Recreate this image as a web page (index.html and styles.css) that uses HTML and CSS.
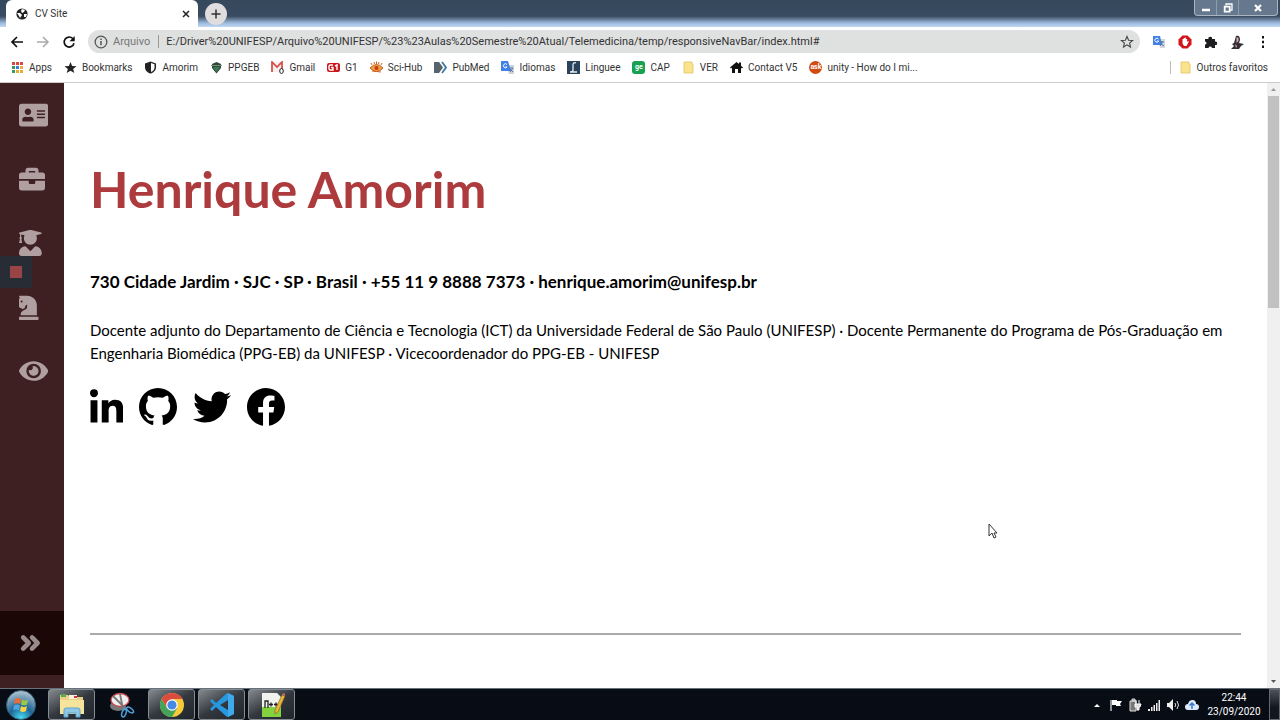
FILE: index.html
```html
<!DOCTYPE html>
<html lang="pt-BR">
<head>
<meta charset="utf-8">
<title>CV Site</title>
<link rel="stylesheet" href="styles.css">
</head>
<body>
<div class="desktop">
  <header class="tabstrip">
    <div class="tab">
      <svg class="tab-icon" viewBox="0 0 12 12"><circle cx="6" cy="6" r="5.6" fill="#222"/><path d="M1 5l3 0 2 2-2 3-1-2zM6 1l3 1-1 2-2 1-1-2zM8 6l3 0-1 3-2 0z" fill="#fff"/></svg>
      <span class="tab-title">CV Site</span>
      <button class="tab-close" aria-label="Fechar guia"><svg viewBox="0 0 8 8"><path d="M1 1l6 6M7 1l-6 6" stroke="#222" stroke-width="1.5"/></svg></button>
    </div>
    <button class="new-tab" aria-label="Nova guia"><svg viewBox="0 0 12 12"><path d="M6 1.500v9M1.500 6h9" stroke="#333" stroke-width="1.500"/></svg></button>
    <div class="window-controls">
      <button aria-label="Minimizar"><svg viewBox="0 0 10 10"><path d="M1 7h8" stroke="#fff" stroke-width="2.500"/></svg></button>
      <button aria-label="Restaurar"><svg viewBox="0 0 10 10"><path d="M3 2.500V1h6v6H7.500" fill="none" stroke="#fff" stroke-width="1.300"/><path d="M1.700 3.700h5v5h-5z" fill="none" stroke="#fff" stroke-width="1.800"/></svg></button>
      <button class="close" aria-label="Fechar"><svg viewBox="0 0 10 10"><path d="M2 2l6 6M8 2l-6 6" stroke="#fff" stroke-width="2.200"/></svg></button>
    </div>
  </header>

  <div class="toolbar">
    <button aria-label="Voltar"><svg viewBox="0 0 14 14"><path d="M13 7H2M7 2L2 7l5 5" fill="none" stroke="#111" stroke-width="1.700"/></svg></button>
    <button aria-label="Avançar"><svg viewBox="0 0 14 14"><path d="M1 7h11M7 2l5 5-5 5" fill="none" stroke="#aaa" stroke-width="1.500"/></svg></button>
    <button aria-label="Recarregar"><svg viewBox="0 0 14 14"><path d="M12 8.200A5 5 0 1 1 10.700 3.500L12 5" fill="none" stroke="#111" stroke-width="1.700"/><path d="M12.700 1v5.300H7.500z" fill="#111"/></svg></button>
    <div class="omnibox">
      <svg class="info" viewBox="0 0 12 12"><circle cx="6" cy="6" r="5" fill="none" stroke="#555" stroke-width="1.100"/><path d="M6 5.200v3.600M6 3v1.300" stroke="#555" stroke-width="1.300"/></svg>
      <label class="scheme" for="url">Arquivo</label>
      <input id="url" class="url" type="text" value="E:/Driver%20UNIFESP/Arquivo%20UNIFESP/%23%23Aulas%20Semestre%20Atual/Telemedicina/temp/responsiveNavBar/index.html#">
      <button aria-label="Adicionar aos favoritos"><svg viewBox="0 0 14 14"><path d="M7 1.500l1.600 3.700 4 .3-3 2.600.9 3.900L7 9.900l-3.500 2.100.9-3.900-3-2.600 4-.3z" fill="none" stroke="#444" stroke-width="1.100"/></svg></button>
    </div>
    <div class="extensions">
      <button aria-label="Tradutor"><svg viewBox="0 0 14 14"><path d="M6 4h7v9H8z" fill="#d5d9dd"/><path d="M1 1h7l2 9H1z" fill="#4180e8"/><path d="M6.500 4A2 2 0 1 0 6.700 6H5" fill="none" stroke="#fff"/><path d="M8 7h4M10 6v1c0 2-1 3-2 4M9 9l3 2" fill="none" stroke="#50749a"/></svg></button>
      <button aria-label="Bloqueador"><svg viewBox="0 0 14 14"><path d="M4.500.5h5l4 4v5l-4 4h-5l-4-4v-5z" fill="#d3121b"/><path d="M4.500 6V4h1.200V3h1.200v-.5h1V4h1.200v3l1-1 .8.600L8.500 11H6L4.500 8.500z" fill="#fff"/></svg></button>
      <button aria-label="Extensões"><svg viewBox="0 0 14 14"><path d="M1 4h3.500a1.800 1.800 0 1 1 3.500 0h3v2.500a1.800 1.800 0 1 1 0 3.500v3H8a1.800 1.800 0 0 0-3.500 0H1V9.500a1.500 1.500 0 0 0 0-3z" fill="#1d1d1f"/></svg></button>
      <button aria-label="Perfil"><svg viewBox="0 0 14 14"><path d="M6 1c3-1 4 1 4 4l-1 3 5 1-3 2-2 3H1l3-3-2-2 2-1z" fill="#342d35"/><path d="M6.500 2l2 1v3l-2 2zM5 9l2 2-1 2z" fill="#d3b4b2"/></svg></button>
      <button aria-label="Menu"><svg viewBox="0 0 14 14"><path d="M6 1h2v2.400H6zM6 5.800h2v2.400H6zM6 10.600h2V13H6z" fill="#111"/></svg></button>
    </div>
  </div>

  <nav class="bookmarks" aria-label="Favoritos">
    <a href="#"><svg viewBox="0 0 13 13"><path d="M1 1h3v3H1zM5 1h3v3H5zM9 1h3v3H9z" fill="#d64a3f"/><path d="M1 5h3v3H1z" fill="#3b9a55"/><path d="M5 5h3v3H5z" fill="#4279dc"/><path d="M9 5h3v3H9z" fill="#eab03c"/><path d="M1 9h3v3H1z" fill="#3b9a55"/><path d="M5 9h7v3H5z" fill="#e4ad35"/><path d="M4.500 0v13M8.500 0v13M0 4.500h13M0 8.500h13" stroke="#fff"/></svg>Apps</a>
    <a href="#"><svg viewBox="0 0 13 13"><path d="M6.500 1l1.600 3.900 4.400.3-3.400 2.700 1.200 4.200-3.800-2.400-3.800 2.400 1.200-4.200L.5 5.200l4.400-.3z" fill="#222"/></svg>Bookmarks</a>
    <a href="#"><svg viewBox="0 0 13 13"><path d="M6.500.5l5.500 2v4c0 3-2.500 5.200-5.500 6C3.500 11.700 1 9.500 1 6.500v-4z" fill="#222"/><path d="M7 2l3.500 1.300v3.200c0 2-1.500 3.600-3.500 4.400z" fill="#fff"/></svg>Amorim</a>
    <a href="#"><svg viewBox="0 0 13 13"><path d="M2 3l4.500-2L11 3v4l-4.500 5.500L2 7z" fill="#2d4838"/><path d="M1 4.500h11" stroke="#769578"/><path d="M3 6h7l-3.500 5.500z" fill="#3d7952"/></svg>PPGEB</a>
    <a href="#"><svg viewBox="0 0 13 13"><path d="M0 1h12v10H0z" fill="#f4eeee"/><path d="M1 11V1l5 5 5-5v10" fill="none" stroke="#d64b45" stroke-width="1.700"/><ellipse cx="10.500" cy="10" rx="1.800" ry="2.500" fill="#fff" stroke="#222"/></svg>Gmail</a>
    <a href="#"><svg viewBox="0 0 13 13"><rect y="2" width="13" height="9" rx="2" fill="#c9171e"/><path d="M6 4H3L2 5v3l1 1h3V6.500H4M8 5l2-1v5" fill="none" stroke="#fff" stroke-width="1.400"/></svg>G1</a>
    <a href="#"><svg viewBox="0 0 13 13"><path d="M0 7q6.500-7 13 0-6.500 7-13 0z" fill="#f1a13b" stroke="#bd5d20"/><circle cx="6.500" cy="7" r="2" fill="#c63921"/><path d="M2 4L1 2M4.500 3L4 1M6.500 3V.5M8.500 3L9 1M11 4l1-2M2 10l9 1" stroke="#ce6322"/></svg>Sci-Hub</a>
    <a href="#"><svg viewBox="0 0 13 13"><path d="M0 1h5l4 5.500L5 12H0z" fill="#59636d"/><path d="M8 1l4 5.500L8 12" fill="none" stroke="#3d78a9" stroke-width="1.800"/></svg>PubMed</a>
    <a href="#"><svg viewBox="0 0 13 13"><path d="M5 4h8v9H8z" fill="#cbd4dc"/><path d="M0 0h7l3 10H0z" fill="#4180e8"/><path d="M6 3.500A2 2 0 1 0 6 6H4.500" fill="none" stroke="#fff"/><path d="M8 7h4l-3 4M9 8l3 3" fill="none" stroke="#597aa0"/></svg>Idiomas</a>
    <a href="#"><svg viewBox="0 0 13 13"><path d="M0 0h13v13H0z" fill="#29435d"/><path d="M9 2Q6 1 6 4v5q0 2-3 2h7" fill="none" stroke="#e7edf0" stroke-width="1.300"/></svg>Linguee</a>
    <a href="#"><span class="badge green">ge</span>CAP</a>
    <a href="#"><svg viewBox="0 0 13 13"><path d="M2 1h8v2h1v9H2z" fill="#fae38a" stroke="#e1c36a" stroke-width=".8"/></svg>VER</a>
    <a href="#"><svg viewBox="0 0 13 13"><path d="M0 6.500L6.500 1 9 3V1.500h2v3.200l2 1.800-1 1-1-.8V12H8V8H5v4H2V6.700l-1 .8z" fill="#111"/></svg>Contact V5</a>
    <a href="#"><span class="badge orange">ask</span>unity - How do I mi...</a>
    <a href="#" class="other"><svg viewBox="0 0 13 13"><path d="M2 1h8v2h1v9H2z" fill="#fae38a" stroke="#e1c36a" stroke-width=".8"/></svg>Outros favoritos</a>
  </nav>

  <div class="page">
    <nav class="sidebar" aria-label="Seções">
      <a href="#" aria-label="Contato"><svg viewBox="0 0 576 512"><path d="M528 32H48C21.500 32 0 53.500 0 80v352c0 26.500 21.500 48 48 48h480c26.500 0 48-21.500 48-48V80c0-26.500-21.500-48-48-48zm-352 96c35.300 0 64 28.700 64 64s-28.700 64-64 64-64-28.700-64-64 28.700-64 64-64zm112 236.800c0 10.600-10 19.200-22.400 19.200H86.400C74 384 64 375.400 64 364.800v-19.200c0-31.800 30.100-57.600 67.200-57.600h5c12.300 5.100 25.700 8 39.800 8s27.600-2.900 39.800-8h5c37.100 0 67.200 25.800 67.200 57.600v19.200zM512 312c0 4.400-3.600 8-8 8H360c-4.400 0-8-3.600-8-8v-16c0-4.400 3.600-8 8-8h144c4.400 0 8 3.600 8 8v16zm0-64c0 4.400-3.600 8-8 8H360c-4.400 0-8-3.600-8-8v-16c0-4.400 3.600-8 8-8h144c4.400 0 8 3.600 8 8v16zm0-64c0 4.400-3.600 8-8 8H360c-4.400 0-8-3.600-8-8v-16c0-4.400 3.600-8 8-8h144c4.400 0 8 3.600 8 8v16z"/></svg></a>
      <a href="#" aria-label="Experiência"><svg viewBox="0 0 512 512"><path d="M320 336c0 8.840-7.160 16-16 16h-96c-8.840 0-16-7.160-16-16v-48H0v144c0 25.600 22.400 48 48 48h416c25.600 0 48-22.400 48-48V288H320v48zm144-208h-80V80c0-25.600-22.400-48-48-48H176c-25.600 0-48 22.400-48 48v48H48c-25.600 0-48 22.400-48 48v80h512v-80c0-25.600-22.400-48-48-48zm-144 0H192V96h128v32z"/></svg></a>
      <a href="#" aria-label="Formação"><svg viewBox="0 0 448 512"><path d="M319.400 320.600L224 416l-95.400-95.400C57.100 323.700 0 382.200 0 454.400v9.600c0 26.500 21.500 48 48 48h352c26.500 0 48-21.500 48-48v-9.600c0-72.200-57.100-130.700-128.600-133.800zM13.600 79.800l6.400 1.500v58.400c-7 4.200-12 11.500-12 20.300 0 8.400 4.600 15.400 11.100 19.700L3.500 242c-1.700 6.900 2.100 14 7.600 14h41.800c5.500 0 9.300-7.100 7.600-14l-15.600-62.300C51.400 175.400 56 168.400 56 160c0-8.800-5-16.100-12-20.300V87.100l66 15.900c-8.600 17.200-14 36.400-14 57 0 70.700 57.300 128 128 128s128-57.300 128-128c0-20.600-5.300-39.800-14-57l96.300-23.200c18.200-4.400 18.200-27.100 0-31.500l-190.400-46c-13-3.100-26.700-3.100-39.700 0L13.600 48.200c-18.100 4.400-18.100 27.200 0 31.600z"/></svg></a>
      <a href="#" aria-label="Habilidades"><svg viewBox="0 0 384 512"><path d="M19 272.470l40.630 18.060a32 32 0 0 0 24.880.47l12.780-5.120a32 32 0 0 0 18.760-20.500l9.220-30.650a24 24 0 0 1 12.550-15.650L159.940 208v50.330a48 48 0 0 1-26.530 42.940l-57.220 28.650A80 80 0 0 0 32 401.480V416h319.860V224c0-106-85.920-192-191.920-192H12A12 12 0 0 0 0 44a16.900 16.900 0 0 0 1.790 7.580L16 80l-9 9a24 24 0 0 0-7 17v137.210a32 32 0 0 0 19 29.260zM52 128a20 20 0 1 1-20 20 20 20 0 0 1 20-20zm316 320H16a16 16 0 0 0-16 16v32a16 16 0 0 0 16 16h352a16 16 0 0 0 16-16v-32a16 16 0 0 0-16-16z"/></svg></a>
      <a href="#" aria-label="Interesses"><svg viewBox="0 0 576 512"><path d="M572.520 241.400C518.290 135.590 410.930 64 288 64S57.680 135.640 3.480 241.410a32.350 32.350 0 0 0 0 29.190C57.710 376.410 165.070 448 288 448s230.320-71.640 284.520-177.410a32.350 32.350 0 0 0 0-29.190zM288 400a144 144 0 1 1 144-144 143.930 143.930 0 0 1-144 144zm0-240a95.310 95.310 0 0 0-25.310 3.790 47.850 47.850 0 0 1-66.900 66.900A95.780 95.780 0 1 0 288 160z"/></svg></a>
      <button class="expand" aria-label="Expandir menu"><svg viewBox="0 0 448 512"><path d="M82 146l110 110L82 366M256 146l110 110-110 110" fill="none" stroke="#988b8b" stroke-width="92" stroke-linecap="round" stroke-linejoin="round"/></svg></button>
    </nav>
    <main class="content">
      <section class="intro">
        <h1>Henrique Amorim</h1>
        <h2>730 Cidade Jardim · SJC · SP · Brasil · +55 11 9 8888 7373 · henrique.amorim@unifesp.br</h2>
        <p>Docente adjunto do Departamento de Ciência e Tecnologia (ICT) da Universidade Federal de São Paulo (UNIFESP) · Docente Permanente do Programa de Pós-Graduação em Engenharia Biomédica (PPG-EB) da UNIFESP · Vicecoordenador do PPG-EB - UNIFESP</p>
        <div class="social">
          <a href="#" aria-label="LinkedIn"><svg viewBox="0 0 448 512"><path transform="translate(0 16)" d="M100.280 448H7.400V148.900h92.880zM53.790 108.100C24.090 108.100 0 83.500 0 53.800a53.790 53.790 0 0 1 107.580 0c0 29.700-24.100 54.300-53.790 54.300zM447.900 448h-92.680V302.400c0-34.700-.7-79.200-48.290-79.200-48.290 0-55.690 37.700-55.690 76.700V448h-92.780V148.900h89.080v40.800h1.300c12.400-23.500 42.690-48.300 87.880-48.300 94 0 111.280 61.900 111.280 142.300V448z"/></svg></a>
          <a href="#" aria-label="GitHub"><svg viewBox="0 0 16 16"><path d="M8 0C3.580 0 0 3.580 0 8c0 3.540 2.290 6.530 5.470 7.590.4.070.55-.17.55-.38 0-.19-.01-.82-.01-1.490-2.010.37-2.530-.49-2.690-.94-.09-.23-.48-.94-.82-1.130-.28-.15-.68-.52-.01-.53.63-.01 1.080.58 1.230.82.72 1.210 1.870.87 2.330.66.070-.52.280-.87.510-1.070-1.780-.2-3.640-.89-3.640-3.950 0-.87.310-1.590.82-2.150-.08-.2-.36-1.020.08-2.120 0 0 .67-.21 2.200.82.640-.18 1.320-.27 2-.27.680 0 1.360.09 2 .27 1.530-1.040 2.200-.82 2.200-.82.440 1.100.16 1.920.08 2.120.51.560.82 1.270.82 2.150 0 3.070-1.870 3.750-3.650 3.950.29.250.54.730.54 1.480 0 1.070-.01 1.930-.01 2.200 0 .21.15.46.55.38A8.013 8.013 0 0 0 16 8c0-4.420-3.580-8-8-8z"/></svg></a>
          <a href="#" aria-label="Twitter"><svg viewBox="0 0 512 512"><path d="M459.370 151.716c.325 4.548.325 9.097.325 13.645 0 138.720-105.583 298.558-298.558 298.558-59.452 0-114.680-17.219-161.137-47.106 8.447.974 16.568 1.299 25.340 1.299 49.055 0 94.213-16.568 130.274-44.832-46.132-.975-84.792-31.188-98.112-72.772 6.498.974 12.995 1.624 19.818 1.624 9.421 0 18.843-1.300 27.614-3.573-48.081-9.747-84.143-51.980-84.143-102.985v-1.299c13.969 7.797 30.214 12.670 47.431 13.319-28.264-18.843-46.781-51.005-46.781-87.391 0-19.492 5.197-37.360 14.294-52.954 51.655 63.675 129.300 105.258 216.365 109.807-1.624-7.797-2.599-15.918-2.599-24.040 0-57.828 46.782-104.934 104.934-104.934 30.213 0 57.502 12.670 76.670 33.137 23.715-4.548 46.456-13.320 66.599-25.340-7.798 24.366-24.366 44.833-46.132 57.827 21.117-2.273 41.584-8.122 60.426-16.243-14.292 20.791-32.161 39.308-52.628 54.253z"/></svg></a>
          <a href="#" aria-label="Facebook"><svg viewBox="8 8 496 496"><path d="M504 256C504 119 393 8 256 8S8 119 8 256c0 123.780 90.690 226.380 209.250 245V327.690h-63V256h63v-54.640c0-62.150 37-96.480 93.670-96.480 27.140 0 55.520 4.840 55.520 4.840v61h-31.280c-30.800 0-40.410 19.120-40.410 38.730V256h68.780l-11 71.690h-57.780V501C413.310 482.380 504 379.780 504 256z"/></svg></a>
        </div>
      </section>
    </main>
    <div class="scrollbar">
      <svg viewBox="0 0 13 13"><path d="M4 8l2.500-3L9 8z" fill="#999"/></svg>
      <div class="thumb"></div>
      <svg viewBox="0 0 13 13"><path d="M4 5l2.500 3L9 5z" fill="#555"/></svg>
    </div>
  </div>

  <footer class="taskbar">
    <button class="start" aria-label="Iniciar"><svg viewBox="0 0 30 30"><defs><radialGradient id="orb" cx=".5" cy=".95" r=".9"><stop offset="0" stop-color="#48dcf4"/><stop offset=".45" stop-color="#1e6597"/><stop offset="1" stop-color="#a8bfca"/></radialGradient></defs><circle cx="15" cy="15" r="14.500" fill="url(#orb)" stroke="#315d76"/><path d="M9 9q3-2 6 0l-1 5q-3-2-6 0z" fill="#ef6b34"/><path d="M16 9.500q3 2 6 0l-1 5q-3 2-6 0z" fill="#9ac84b"/><path d="M8 15.500q3-2 6 0l-1 5q-3-2-6 0z" fill="#4ba5e0"/><path d="M15 16q3 2 6 0l-1 5q-3 2-6 0z" fill="#f9d34a"/></svg></button>
    <button class="task open" aria-label="Explorador"><svg viewBox="0 0 26 26"><path d="M1 3h8l2 2h13v17H1z" fill="#e8d184"/><path d="M2 2h5v3H2z" fill="#59a85a"/><path d="M10 3h8v4h-8z" fill="#f7f3dd"/><path d="M15 4h3v2h-3z" fill="#d33"/><path d="M1 8h24v14H1z" fill="#f6e49c"/><path d="M5 25v-7q0-2 2-2h12q2 0 2 2v7h-4v-4H9v4z" fill="#8fc8e5" stroke="#5ba3ca"/></svg></button>
    <button class="task" aria-label="Captura"><svg viewBox="0 0 26 26"><ellipse cx="9" cy="14" rx="8" ry="5" fill="#777"/><ellipse cx="11" cy="8" rx="9" ry="6.500" fill="#eee" stroke="#c94b50" stroke-width="1.300"/><path d="M4 4l13 13M11 2l3 15" stroke="#777" stroke-width="1.800"/><ellipse cx="15" cy="21" rx="2" ry="4" transform="rotate(20 15 21)" fill="none" stroke="#4ba2db" stroke-width="1.500"/><ellipse cx="21" cy="18" rx="2" ry="4" transform="rotate(-55 21 18)" fill="none" stroke="#4ba2db" stroke-width="1.500"/></svg></button>
    <button class="task open" aria-label="Chrome"><svg viewBox="0 0 26 26"><circle cx="13" cy="13" r="12" fill="#f6ca38"/><path d="M2.600 7A12 12 0 0 1 23.400 7H13L8 16z" fill="#dd4b3e"/><path d="M2.600 7A12 12 0 0 0 13 25l5.200-9H8z" fill="#43a35a"/><circle cx="13" cy="13" r="5.800" fill="#fff"/><circle cx="13" cy="13" r="4.600" fill="#4688e8"/></svg></button>
    <button class="task open" aria-label="Visual Studio Code"><svg viewBox="0 0 26 26"><path d="M18 1l7 3v18l-7 3L7 15l-4 4-2-2 4-4-4-4 2-2 4 4zm1 7l-8 5 8 5z" fill="#2798df"/><path d="M19 1l6 3v18l-6 3z" fill="#40a9eb"/></svg></button>
    <button class="task open" aria-label="Notepad++"><svg viewBox="0 0 26 26"><path d="M3 1h15l4 4v20H3z" fill="#f0f2ed"/><path d="M3 15h19v10H3z" fill="#82d33d"/><path d="M6 16V9h3v7M10 12.500h4M12 10.500v4M15 12.500h4M17 10.500v4" fill="none" stroke="#222" stroke-width="1.300"/><path d="M23 3l3 1-7 16-3 2v-4z" fill="#e9b73a" stroke="#8a651c" stroke-width=".7"/><path d="M23 3l1-2 3 1-1 2z" fill="#c46c68"/></svg></button>
    <div class="tray">
      <svg viewBox="0 0 14 14"><path d="M4 9l3-3 3 3z" fill="#fff"/></svg>
      <svg viewBox="0 0 14 14"><path d="M2 2v11" stroke="#ddd" stroke-width="1.300"/><path d="M3 2h5v1h5l-2 3 1 2H7V7H3z" fill="#fff"/></svg>
      <svg viewBox="0 0 14 14"><path d="M2 3h6v10H2zM4 1h3v2H4z" fill="#777" stroke="#ddd"/><path d="M8 2v4M11 2v4M7 6h6l-1 3h-1v3H9V9H7z" fill="#ddd" stroke="#fff"/></svg>
      <svg viewBox="0 0 14 14"><path d="M1 11h2v2H1zM4 9h1.500v4H4zM6.500 7H8v6H6.500zM9 5h1.500v8H9zM11.500 2H13v11h-1.500z" fill="#eee"/></svg>
      <svg viewBox="0 0 14 14"><path d="M1 5h2l4-4v12L3 9H1z" fill="#eee"/><path d="M9 5q1.500 2 0 4M11 3q3 4 0 8" fill="none" stroke="#ddd"/></svg>
      <svg viewBox="0 0 14 14"><path d="M3 12a3 3 0 0 1 0-6q1-4 4.500-4T11 6a3 3 0 0 1 0 6z" fill="#dfeaff"/><path d="M7 11V5M4.500 7.500L7 5l2.500 2.500" fill="none" stroke="#3878cf" stroke-width="1.500"/></svg>
    </div>
    <div class="clock"><time>22:44</time><time>23/09/2020</time></div>
    <button class="show-desktop" aria-label="Mostrar área de trabalho"></button>
  </footer>

  <div class="recorder"></div>
  <svg class="cursor" viewBox="0 0 10 16"><path d="M1 1v12l3-3 2 5 2-1-2-4h3z" fill="#fff" stroke="#333"/></svg>
</div>
</body>
</html>
```
FILE: styles.css
```css
* { box-sizing: border-box; }
body { margin: 0; font-family: Roboto, "Noto Sans", sans-serif; font-size: 10px; color: #333; }
button { padding: 0; border: 0; background: none; display: flex; align-items: center; justify-content: center; }
a { color: inherit; text-decoration: none; }
svg { display: block; flex: none; }
.desktop { position: relative; display: flex; flex-direction: column; min-height: 100vh; background: #fff; overflow: hidden; }

.tabstrip { display: flex; height: 27px; padding-left: 6px; background: linear-gradient(#36485c 0, #394b60 60%, #9db9db 85%, #bfd8f6 100%); }
.tab { display: flex; align-items: center; gap: 7px; width: 192px; padding: 0 8px 0 10px; background: #fff; border-radius: 6px 6px 0 0; }
.tab-icon { width: 12px; height: 12px; }
.tab-title { flex: 1; }
.tab-close svg { width: 8px; height: 8px; }
.new-tab { width: 22px; height: 22px; margin: 3px 0 0 7px; border-radius: 50%; background: #dfdddd; }
.new-tab svg { width: 12px; height: 12px; }
.window-controls { display: flex; height: 16px; margin: 0 2px 0 auto; border: 1px solid #a9b5c2; border-top: 0; border-radius: 0 0 4px 4px; background: #65788d; }
.window-controls button { width: 22px; border-right: 1px solid #8e9cab; }
.window-controls .close { width: 38px; border-right: 0; }
.window-controls svg { width: 10px; height: 10px; }

.toolbar { display: flex; align-items: center; gap: 12px; height: 29px; padding: 0 10px; }
.toolbar svg { width: 14px; height: 14px; }
.omnibox { flex: 1; display: flex; align-items: center; height: 23px; padding: 0 6px; border-radius: 12px; background: #dfe0e0; font-size: 11px; }
.toolbar .info { margin-right: 5px; }
.scheme { padding-right: 8px; border-right: 1px solid #999; line-height: 13px; color: #777; }
.url { flex: 1; min-width: 0; padding: 0 7px; border: 0; background: none; font: inherit; color: #333; }
.extensions { display: flex; gap: 12px; }

.bookmarks { display: flex; align-items: center; gap: 12px; height: 27px; padding: 0 12px 4px 11px; border-bottom: 1px solid #ccc; white-space: nowrap; }
.bookmarks a { display: flex; align-items: center; gap: 5px; }
.bookmarks svg { width: 13px; height: 13px; }
.bookmarks .other { margin-left: auto; padding-left: 8px; border-left: 1px solid #bbb; }
.badge { width: 13px; height: 13px; border-radius: 3px; color: #fff; font-size: 7px; font-weight: 700; line-height: 12px; text-align: center; }
.green { background: #17a150; }
.orange { border-radius: 50%; background: #d04a12; }

.page { flex: 1; display: flex; }
.sidebar { display: flex; flex-direction: column; width: 64px; padding-bottom: 13px; background: #3e2022; }
.sidebar a, .expand { display: flex; align-items: center; justify-content: flex-start; height: 64px; padding-left: 19px; }
.sidebar svg { height: 26px; fill: #b09fa0; }
.expand { margin-top: auto; background: #1b0706; }
.content { flex: 1; padding: 72px 26px 0; font-family: Lato, "Noto Sans", sans-serif; color: #000; }
.intro { min-height: 480px; border-bottom: 2px solid #aaa; }
h1 { margin: 0 0 47px; font-size: 50px; line-height: 68px; font-weight: 700; color: #ad3b3d; }
h2 { margin: 0 0 25px; font-size: 17px; line-height: 24px; font-weight: 700; }
p { margin: 0; font-size: 15px; line-height: 23px; }
.social { display: flex; gap: 16px; margin-top: 23px; }
.social svg { height: 38px; }
.scrollbar { display: flex; flex-direction: column; width: 13px; background: #f0f0f0; }
.scrollbar svg { width: 13px; height: 13px; }
.thumb { height: 212px; margin: 0 1px auto; background: #c1c1c1; }

.taskbar { display: flex; align-items: center; height: 32px; padding-left: 6px; border-top: 1px solid #67717b; background: #080c15; color: #fff; }
.start svg { width: 30px; height: 30px; }
.start { margin-right: 12px; }
.task { width: 47px; height: 31px; margin-right: 3px; border: 1px solid transparent; border-radius: 3px; }
.task svg { width: 26px; height: 26px; }
.open { border-color: #858c92; background: linear-gradient(150deg, #858a8f, #33383e 50%, #20252c); }
.tray { display: flex; gap: 5px; margin-left: auto; }
.tray svg { width: 14px; height: 14px; }
.clock { display: flex; flex-direction: column; width: 70px; font-size: 10px; line-height: 14px; text-align: center; }
.show-desktop { width: 11px; height: 31px; border: 1px solid #626970; background: linear-gradient(#4c5258, #111720 60%); }

.recorder { position: absolute; left: 0; top: 256px; width: 32px; height: 32px; border: 10px solid #282c35; background: #9b4448; }
.cursor { position: absolute; left: 988px; top: 523px; width: 10px; height: 16px; }
```
